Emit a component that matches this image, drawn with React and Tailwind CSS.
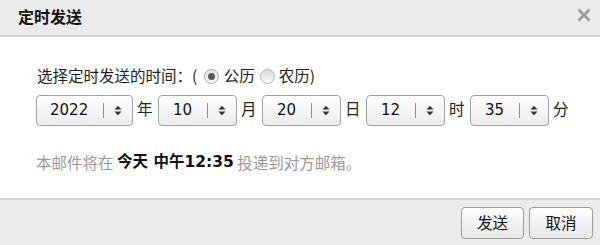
import React from "react";

function Arrows() {
  return (
    <svg width="8" height="11" viewBox="0 0 8 11" className="block">
      <path d="M0.5 4.5 L4 0.8 L7.5 4.5 Z" fill="#333" />
      <path d="M0.5 6.5 L4 10.2 L7.5 6.5 Z" fill="#333" />
    </svg>
  );
}

function Select({ value, w, pl }) {
  return (
    <div
      className={`${w} h-[31px] shrink-0 flex items-center rounded-[4px] border border-[#a3a3a3] bg-gradient-to-b from-[#ffffff] to-[#ececec] shadow-[inset_0_1px_0_#fff]`}
    >
      <span className={`${pl} flex-1 font-['DejaVu_Sans',sans-serif] text-[15px] leading-none text-[#111]`}>{value}</span>
      <span className="w-px h-[15px] bg-[#8f8f8f]" />
      <span className="w-[28px] flex justify-center">
        <Arrows />
      </span>
    </div>
  );
}

function Unit({ children }) {
  return <span className="ml-[4px] mr-[6px] w-[15px] text-[15.5px] leading-none text-[#222] -translate-y-[2px]">{children}</span>;
}

export default function App() {
  return (
    <div className="w-[600px] h-[245px] flex flex-col bg-white font-['Noto_Sans_CJK_SC',sans-serif] overflow-hidden">
      <div className="h-[37px] shrink-0 flex items-center justify-between pl-[18px] pr-[9px] bg-[#ebebeb] border-b-2 border-[#d4d4d4]">
        <span className="text-[16px] font-bold text-[#111] -translate-y-[2px]">定时发送</span>
        <svg width="14" height="14" viewBox="0 0 14 14" className="-translate-y-[3px]">
          <path d="M1.5 1.5 L12.5 12.5 M12.5 1.5 L1.5 12.5" stroke="#9a9a9a" strokeWidth="2.6" />
        </svg>
      </div>
      <div className="flex-1 pl-[36px] pr-[20px] pt-[28px]">
        <div className="flex items-center h-[22px] text-[15.5px] text-[#222] whitespace-pre">
          <span className="pl-px">选择定时发送的时间：( </span>
          <span className="ml-[3px] w-[15px] h-[15px] rounded-full border border-[#a9a9a9] bg-gradient-to-b from-[#e4e4e4] to-[#f6f6f6] flex items-center justify-center">
            <span className="w-[7px] h-[7px] rounded-full bg-[#5a5a5a]" />
          </span>
          <span className="ml-[5px]">公历</span>
          <span className="ml-[5px] w-[15px] h-[15px] rounded-full border border-[#b3b3b3] bg-gradient-to-b from-[#dcdcdc] to-[#f7f7f7]" />
          <span className="ml-[4px]">农历)</span>
        </div>
        <div className="mt-[8px] flex items-center">
          <Select value="2022" w="w-[97px]" pl="pl-[13px]" />
          <Unit>年</Unit>
          <Select value="10" w="w-[79px]" pl="pl-[14px]" />
          <Unit>月</Unit>
          <Select value="20" w="w-[79px]" pl="pl-[14px]" />
          <Unit>日</Unit>
          <Select value="12" w="w-[79px]" pl="pl-[14px]" />
          <Unit>时</Unit>
          <Select value="35" w="w-[79px]" pl="pl-[14px]" />
          <Unit>分</Unit>
        </div>
        <div className="mt-[26px] h-[22px] flex items-center text-[15.5px] text-[#999] whitespace-pre">
          <span>本邮件将在 </span>
          <span className="font-bold text-[#111] font-['DejaVu_Sans','Noto_Sans_CJK_SC',sans-serif]">今天 中午12:35</span>
          <span> 投递到对方邮箱。</span>
        </div>
      </div>
      <div className="h-[47px] shrink-0 flex items-center justify-end gap-[5px] pr-[7px] bg-[#ebebeb] border-t-2 border-[#d4d4d4]">
        <button className="w-[63px] h-[32px] rounded-[4px] border border-[#9c9c9c] bg-gradient-to-b from-[#ffffff] to-[#e6e6e6] text-[15.5px] text-[#111] leading-none">发送</button>
        <button className="w-[64px] h-[32px] rounded-[4px] border border-[#9c9c9c] bg-gradient-to-b from-[#ffffff] to-[#e6e6e6] text-[15.5px] text-[#111] leading-none">取消</button>
      </div>
    </div>
  );
}
